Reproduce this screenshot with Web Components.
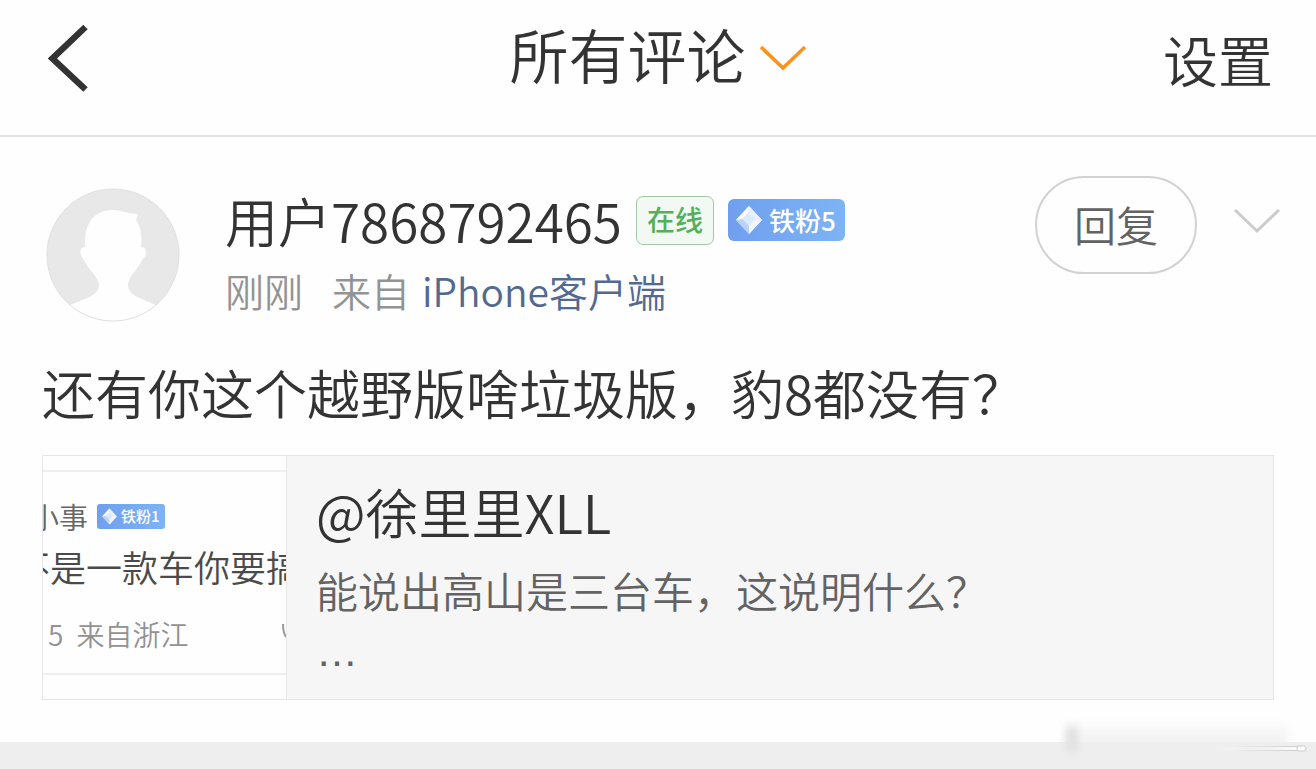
<!DOCTYPE html>
<html lang="zh-CN">
<head>
<meta charset="utf-8">
<meta name="viewport" content="width=device-width, initial-scale=1">
<title>所有评论</title>
<style>
  html { background: #eee; }
  body { margin: 0; color: #333; font-family: "Noto Sans CJK SC", sans-serif; font-weight: 350; }
</style>
</head>
<body>
<comments-page></comments-page>

<script>
function attach(el, html) {
  el.attachShadow({ mode: 'open' });
  el.shadowRoot.innerHTML = html;
}

class NavBar extends HTMLElement {
  constructor() {
    super();
    attach(this, `
      <style>
        :host { display: block; background: #fefefe; border-bottom: 2px solid #e4e4e4; }
        header { display: grid; grid-template-columns: 1fr auto 1fr; align-items: center; height: 116px; padding: 0 43px 19px; }
        button { display: flex; align-items: center; border: 0; padding: 0; background: none; color: inherit; font: inherit; cursor: pointer; }
        .back { padding-left: 5px; }
        .title { gap: 13px; padding-bottom: 8px; font-size: 59px; line-height: 84px; }
        .title svg { padding-top: 8px; }
        .settings { justify-self: end; font-size: 55px; line-height: 84px; }
        svg { display: block; fill: none; }
        h1 { margin: 0; font: inherit; }
      </style>
      <header>
        <button class="back" aria-label="返回">
          <svg width="42" height="68" viewBox="0 0 42 68"><path d="M37.5 3L4.5 34.5L37.5 65.5" stroke="#333" stroke-width="6.4"/></svg>
        </button>
        <h1><button class="title">
          <slot></slot>
          <svg width="48" height="28" viewBox="0 0 48 28"><path d="M2 3L24 24L46 3" stroke="#f7931e" stroke-width="3.6"/></svg>
        </button></h1>
        <button class="settings"><slot name="action"></slot></button>
      </header>
    `);
  }
}
customElements.define('nav-bar', NavBar);

class UserAvatar extends HTMLElement {
  constructor() {
    super();
    attach(this, `
      <style>
        :host { display: block; flex: none; }
        svg { display: block; }
      </style>
      <svg width="134" height="134" viewBox="0 0 134 134">
        <defs><clipPath id="c"><circle cx="67" cy="67" r="66"/></clipPath></defs>
        <circle cx="67" cy="67" r="66" fill="#e8e8e8"/>
        <path clip-path="url(#c)" fill="#fefefe" d="M39 59C38 38 46 22 67 22C75 22 78 25 92 26L90 32C95 39 96 47 95 59C102 59 101 68 96 72C92 82 82 88 82 97C82 107 94 110 110 117L110 134H24V117C41 110 53 107 53 97C53 89 42 82 38 72C33 66 33 59 39 59Z"/>
        <circle cx="67" cy="67" r="66" fill="none" stroke="#e0e0e0"/>
      </svg>
    `);
  }
}
customElements.define('user-avatar', UserAvatar);

class OnlineBadge extends HTMLElement {
  constructor() {
    super();
    attach(this, `
      <style>
        :host { display: block; flex: none; box-sizing: border-box; height: 49px; padding: 0 10px; border: 1px solid #a3c6a6; border-radius: 7px; background: #f2f9f2; color: #55af5a; font-size: 28px; line-height: 44px; font-weight: 500; }
      </style>
      <slot></slot>
    `);
  }
}
customElements.define('online-badge', OnlineBadge);

class FanBadge extends HTMLElement {
  constructor() {
    super();
    attach(this, `
      <style>
        :host { display: flex; flex: none; align-items: center; gap: 6px; box-sizing: border-box; height: 42px; padding: 0 9px 0 7px; border-radius: 6px; background: linear-gradient(90deg, #6f9fee, #7db4f5); color: #fff; font-size: 26px; line-height: 40px; font-weight: 500; }
        :host([small]) { gap: 3px; height: 25px; padding: 0 5px 0 4px; border-radius: 3px; font-size: 15px; line-height: 24px; }
        svg { display: block; width: 28px; height: 30px; }
        :host([small]) svg { width: 17px; height: 17px; }
      </style>
      <svg viewBox="0 0 28 30">
        <path d="M14 1L27 15L14 29L1 15Z" fill="#dbe9ff"/>
        <path d="M14 1L1 15L7 14L13 8Z" fill="#fff"/>
        <path d="M14 1L27 15L20 14L13 8Z" fill="#e6f0ff"/>
        <path d="M1 15L14 29L14 21L7 14Z" fill="#b9d0fa"/>
        <path d="M27 15L14 29L14 21L20 14Z" fill="#f2f6ff"/>
      </svg>
      <slot></slot>
    `);
  }
}
customElements.define('fan-badge', FanBadge);

class CommentHeader extends HTMLElement {
  constructor() {
    super();
    attach(this, `
      <style>
        :host { display: flex; align-items: flex-start; padding: 0 35px 0 46px; }
        user-avatar { margin-top: 12px; }
        .info { flex: 1; min-width: 0; margin: 8px 0 0 45px; }
        .name { display: flex; align-items: center; font-size: 53px; line-height: 72px; white-space: nowrap; }
        .name online-badge, .name fan-badge { margin-left: 14px; }
        .meta { display: flex; font-size: 39px; line-height: 68px; color: #939393; white-space: nowrap; }
        .from { margin: 0 12px 0 29px; }
        a { color: #53698f; text-decoration: none; }
        .actions { display: flex; align-items: center; gap: 36px; }
        .reply { box-sizing: border-box; height: 98px; padding: 0 37px 2px; border: 2px solid #d2d2d2; border-radius: 49px; background: none; color: #636363; font: inherit; font-size: 42px; line-height: 60px; cursor: pointer; }
        .more { border: 0; padding: 0 0 8px; background: none; cursor: pointer; }
        .more svg { display: block; fill: none; }
      </style>
      <user-avatar></user-avatar>
      <div class="info">
        <div class="name">
          <slot name="name"></slot>
          <online-badge>在线</online-badge>
          <fan-badge>铁粉5</fan-badge>
        </div>
        <div class="meta">
          <span>刚刚</span>
          <span class="from">来自</span>
          <a href="#">iPhone客户端</a>
        </div>
      </div>
      <div class="actions">
        <button class="reply">回复</button>
        <button class="more" aria-label="更多">
          <svg width="48" height="28" viewBox="0 0 48 28"><path d="M2 3L24 24L46 3" stroke="#ccc" stroke-width="3"/></svg>
        </button>
      </div>
    `);
  }
}
customElements.define('comment-header', CommentHeader);

// cropped preview of the quoted post
class PostThumb extends HTMLElement {
  constructor() {
    super();
    attach(this, `
      <style>
        :host { display: block; flex: none; box-sizing: border-box; width: 243px; padding: 14px 0 24px; overflow: hidden; background: #fefefe; white-space: nowrap; }
        .shot { display: flex; flex-direction: column; border-top: 2px solid #efefef; border-bottom: 2px solid #efefef; height: 201px; }
        .row { display: flex; align-items: center; }
        .user { margin: 24px 0 0 -13px; font-size: 29px; line-height: 40px; color: #666; }
        fan-badge { margin-left: 9px; }
        .text { margin-left: -29px; font-size: 36px; line-height: 60px; color: #4a4a4a; }
        .foot { margin-top: 6px; padding-left: 5px; gap: 13px; font-size: 28px; line-height: 64px; color: #929292; }
        svg { display: block; margin-left: auto; }
      </style>
      <div class="shot">
        <div class="row user"><span>小事</span><fan-badge small>铁粉1</fan-badge></div>
        <div class="row text">不是一款车你要搞</div>
        <div class="row foot"><span>5</span><span>来自浙江</span>
          <svg width="4" height="20" viewBox="0 0 4 20"><path d="M1 0C1 6 2 10 4 13" fill="none" stroke="#999" stroke-width="2"/></svg>
        </div>
      </div>
    `);
  }
}
customElements.define('post-thumb', PostThumb);

class QuoteCard extends HTMLElement {
  constructor() {
    super();
    attach(this, `
      <style>
        :host { display: flex; margin: 0 42px; border: 1px solid #e6e6e6; background: #f6f6f6; }
        .content { flex: 1; min-width: 0; padding: 18px 29px 16px; border-left: 1px solid #e9e9e9; }
        h2 { margin: 0; font-size: 53px; line-height: 74px; font-weight: inherit; }
        p { margin: 10px 0 0; font-size: 42px; line-height: 63px; color: #636363; }
        .dots { margin: 0; line-height: 62px; font-family: "Liberation Sans", "Noto Sans CJK SC", sans-serif; }
      </style>
      <post-thumb></post-thumb>
      <div class="content">
        <h2><slot name="author"></slot></h2>
        <p><slot></slot></p>
        <p class="dots">…</p>
      </div>
    `);
  }
}
customElements.define('quote-card', QuoteCard);

class PageFooter extends HTMLElement {
  constructor() {
    super();
    attach(this, `
      <style>
        :host { display: flex; justify-content: flex-end; height: 27px; padding-right: 8px; background: #eee; }
        svg { display: block; flex: none; margin-top: -30px; }
      </style>
      <svg width="256" height="56" viewBox="0 0 256 56" aria-hidden="true">
        <defs>
          <linearGradient id="haze" x2="0" y2="1"><stop stop-color="#eee" stop-opacity="0"/><stop offset="1" stop-color="#eee"/></linearGradient>
          <linearGradient id="line"><stop stop-color="#ccc" stop-opacity="0"/><stop offset="1" stop-color="#ccc"/></linearGradient>
          <linearGradient id="shine"><stop stop-color="#fff" stop-opacity="0"/><stop offset="1" stop-color="#fff"/></linearGradient>
          <filter id="soft" x="-50%" y="-50%" width="200%" height="200%"><feGaussianBlur stdDeviation="4"/></filter>
        </defs>
        <rect x="14" y="8" width="222" height="28" fill="url(#haze)" filter="url(#soft)"/>
        <rect x="14" y="14" width="12" height="26" fill="#e0e0e0" filter="url(#soft)"/>
        <rect x="180" y="34" width="70" height="5" rx="2" fill="url(#line)"/>
        <rect x="160" y="35" width="90" height="3" rx="1" fill="url(#shine)"/>
        <rect x="245" y="34" width="9" height="5" rx="2" fill="#fff" stroke="#ccc"/>
      </svg>
    `);
  }
}
customElements.define('page-footer', PageFooter);

class CommentsPage extends HTMLElement {
  constructor() {
    super();
    attach(this, `
      <style>
        :host { display: block; }
        main { padding: 39px 0 42px; background: #fefefe; }
        .comment { margin: 30px 42px 25px; font-size: 53px; line-height: 76px; }
      </style>
      <nav-bar>所有评论<span slot="action">设置</span></nav-bar>
      <main>
        <comment-header><span slot="name">用户7868792465</span></comment-header>
        <p class="comment">还有你这个越野版啥垃圾版，豹8都没有？</p>
        <quote-card><span slot="author">@徐里里XLL</span>能说出高山是三台车，这说明什么？</quote-card>
      </main>
      <page-footer></page-footer>
    `);
  }
}
customElements.define('comments-page', CommentsPage);
</script>
</body>
</html>
